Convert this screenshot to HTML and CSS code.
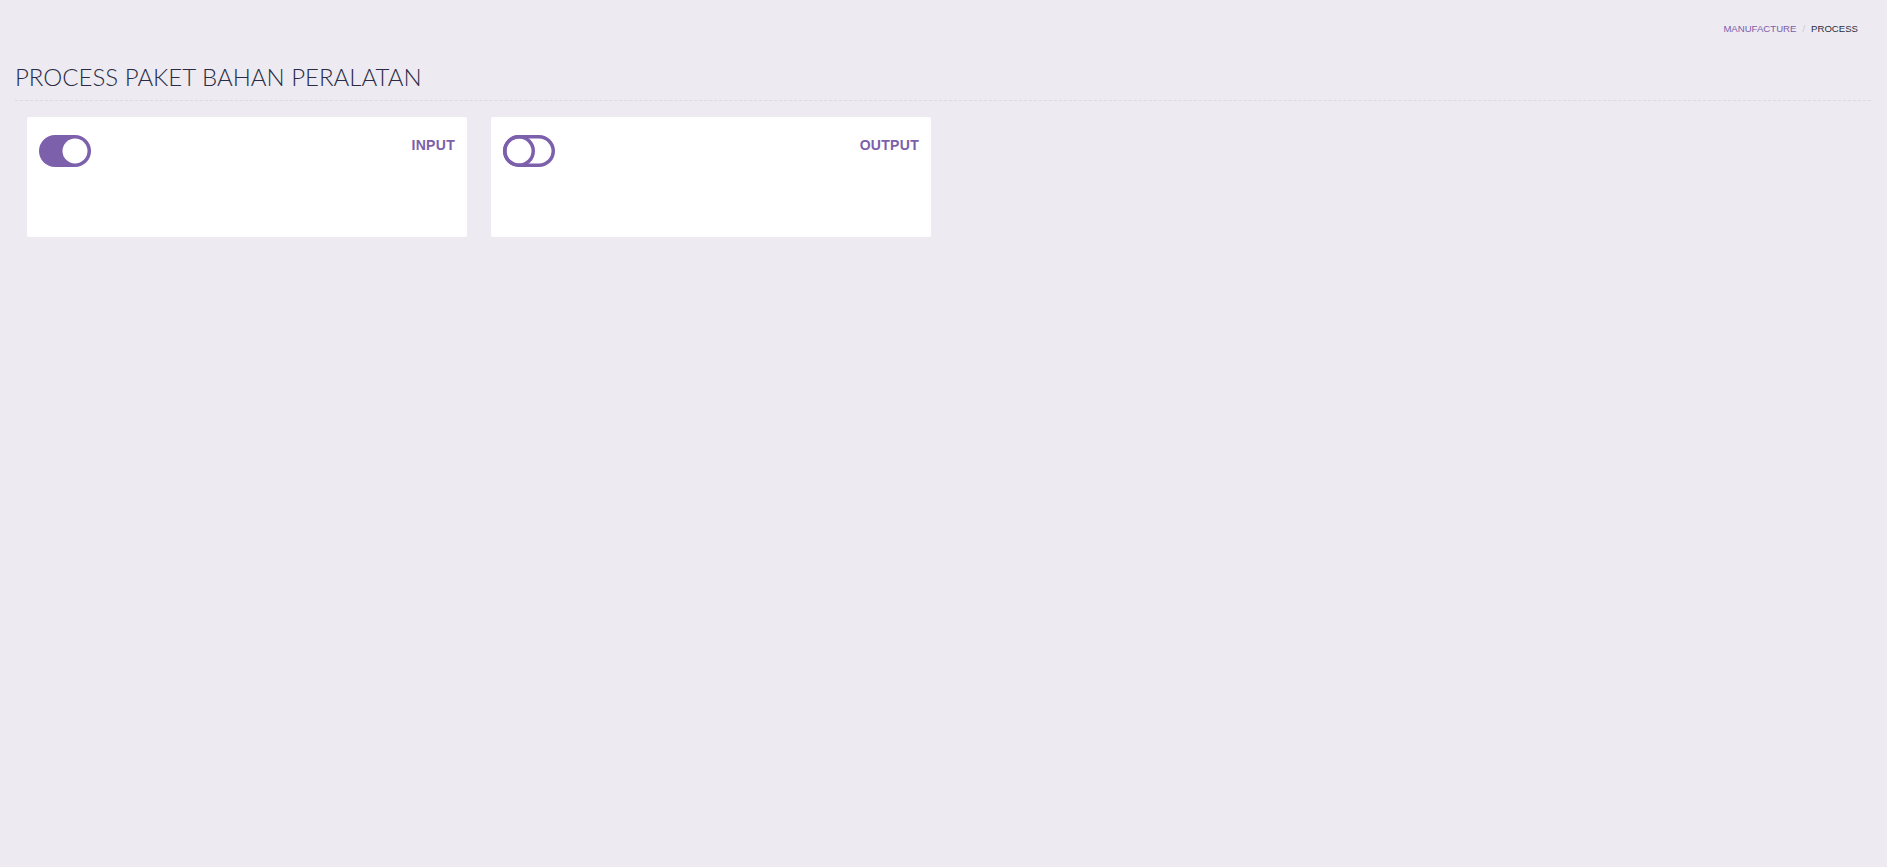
FILE: index.html
```html
<!DOCTYPE html>
<html lang="id">
    <head>
        <meta charset="utf-8" />
        <meta name="viewport" content="width=device-width, initial-scale=1" />
        <title>Process Paket Bahan Peralatan</title>
        <link rel="stylesheet" href="styles.css">
    </head>
    <body>
        <div class="page">
            <ol class="breadcrumb">
                <li><a href="#">MANUFACTURE</a></li>
                <li class="sep">/</li>
                <li class="current">PROCESS</li>
            </ol>
            <h1 class="title">PROCESS PAKET BAHAN PERALATAN</h1>
            <div class="cards">
                <div class="card">
                    <svg class="toggle" viewBox="0 0 52 32" width="52" height="32">
                        <rect x="0" y="0" width="52" height="32" rx="16" fill="#7c60ab"/>
                        <circle cx="36" cy="16" r="12.5" fill="#fff"/>
                    </svg>
                    <span class="label">INPUT</span>
                </div>
                <div class="card">
                    <svg class="toggle" viewBox="0 0 52 32" width="52" height="32">
                        <rect x="1.75" y="1.75" width="48.5" height="28.5" rx="14.25" fill="none" stroke="#7c60ab" stroke-width="3.5"/>
                        <circle cx="16" cy="16" r="14.25" fill="none" stroke="#7c60ab" stroke-width="3.5"/>
                    </svg>
                    <span class="label">OUTPUT</span>
                </div>
            </div>
        </div>
    </body>
</html>
```

FILE: styles.css
```css
* { margin: 0; padding: 0; box-sizing: border-box; }
body { background: #edeaf1; font-family: "Liberation Sans", Arial, sans-serif; color: #333; }

.page { padding: 0 16px 0 15px; }

.breadcrumb {
    list-style: none;
    display: flex;
    justify-content: flex-end;
    gap: 6px;
    padding: 22px 13px 0 0;
    font-size: 9.6px;
    line-height: 14px;}
.breadcrumb a { color: #7c60ab; text-decoration: none; }
.breadcrumb .sep { color: #ccc; }
.breadcrumb .current { color: #2b2d42; }

.title {
    margin-top: 25px;
    padding-bottom: 8px;
    border-bottom: 1px dashed #dcdae0;
    font-family: Lato, sans-serif;
    font-weight: 300;
    font-size: 24px;
    line-height: 31px;
    color: #2a2c45;}

.cards {
    display: flex;
    gap: 24px;
    padding: 16px 12px;}
.card {
    width: 440px;
    height: 120px;
    background: #fff;
    border-radius: 2px;
    padding: 18px 12px;
    display: flex;
    justify-content: space-between;
    align-items: flex-start;}
.toggle { display: block; }
.label {
    font-size: 14px;
    line-height: 20px;
    font-weight: bold;
    letter-spacing: 0.3px;
    color: #7c60ab;}
```
